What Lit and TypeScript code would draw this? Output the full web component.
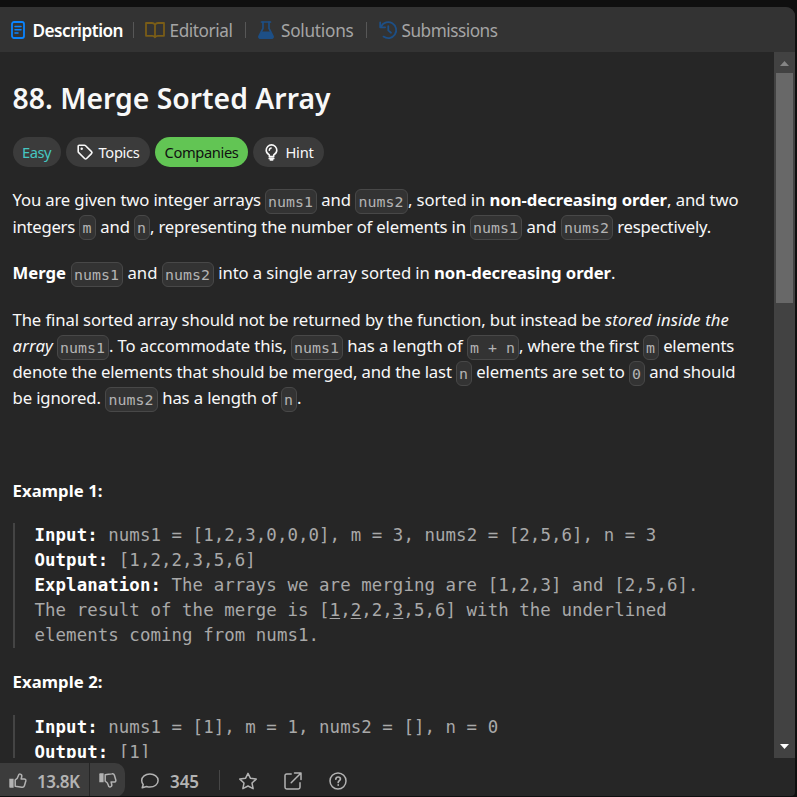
import { LitElement, html, css, svg } from "lit";
import { customElement, property } from "lit/decorators.js";
import { classMap } from "lit/directives/class-map.js";
import { styleMap } from "lit/directives/style-map.js";

/** A run of text tracked so that it fills a given measure. */
@customElement("fit-text")
class FitText extends LitElement {
  @property() text = "";
  @property({ type: Number }) measure = 0;
  @property({ type: Boolean }) underlined = false;

  static styles = css`
    :host { display: block; flex: none; white-space: pre; }
    .run { display: inline-block; vertical-align: top; }
    .underlined { text-decoration: underline; text-underline-offset: 2px; text-decoration-thickness: 1px; }
  `;

  updated() {
    const run = this.renderRoot.querySelector(".run") as HTMLElement;
    this.style.width = `${this.measure}px`;
    run.style.letterSpacing = "0px";
    const natural = run.getBoundingClientRect().width;
    run.style.letterSpacing = `${(this.measure - natural) / this.text.length}px`;
  }

  render() {
    return html`<span class=${classMap({ run: true, underlined: this.underlined })}>${this.text}</span>`;
  }
}

type Kind = "t" | "b" | "i" | "c" | "u";
type Run = [Kind, string, number];

const paragraphs: Run[][][] = [
  [
    [["t", "You are given two integer arrays ", 252.5], ["c", "nums1", 52], ["t", " and ", 38], ["c", "nums2", 53], ["t", ", sorted in ", 81.5], ["b", "non-decreasing order", 177.5], ["t", ", and two", 71.5]],
    [["t", "integers ", 66.5], ["c", "m", 17], ["t", " and ", 38], ["c", "n", 16], ["t", ", representing the number of elements in ", 320], ["c", "nums1", 52], ["t", " and ", 39], ["c", "nums2", 52], ["t", " respectively.", 98]],
  ],
  [
    [["b", "Merge", 53.5], ["t", " ", 5], ["c", "nums1", 52], ["t", " and ", 39], ["c", "nums2", 52], ["t", " into a single array sorted in ", 220], ["b", "non-decreasing order", 177], ["t", ".", 4]],
  ],
  [
    [["t", "The final sorted array should not be returned by the function, but instead be ", 592.5], ["i", "stored inside the", 124]],
    [["i", "array", 40.5], ["t", " ", 4], ["c", "nums1", 52], ["t", ". To accommodate this, ", 182], ["c", "nums1", 52], ["t", " has a length of ", 124], ["c", "m + n", 52], ["t", ", where the first ", 124], ["c", "m", 16], ["t", " elements", 75]],
    [["t", "denote the elements that should be merged, and the last ", 443.5], ["c", "n", 16], ["t", " elements are set to ", 157], ["c", "0", 16], ["t", " and should", 90.5]],
    [["t", "be ignored. ", 92.5], ["c", "nums2", 53], ["t", " has a length of ", 123], ["c", "n", 16], ["t", ".", 4]],
  ],
];

const CELL = 10.54;
const m = (kind: Kind, text: string): Run => [kind, text, text.length * CELL];

const example1: Run[][] = [
  [m("b", "Input:"), m("t", " nums1 = [1,2,3,0,0,0], m = 3, nums2 = [2,5,6], n = 3")],
  [m("b", "Output:"), m("t", " [1,2,2,3,5,6]")],
  [m("b", "Explanation:"), m("t", " The arrays we are merging are [1,2,3] and [2,5,6].")],
  [m("t", "The result of the merge is ["), m("u", "1"), m("t", ","), m("u", "2"), m("t", ",2,"), m("u", "3"), m("t", ",5,6] with the underlined")],
  [m("t", "elements coming from nums1.")],
];
const example2: Run[][] = [
  [m("b", "Input:"), m("t", " nums1 = [1], m = 1, nums2 = [], n = 0")],
  [m("b", "Output:"), m("t", " [1]")],
];

const line = (runs: Run[]) => html`<div class="line">
  ${runs.map(([kind, text, width]) =>
    kind === "c"
      ? html`<code class="chip" style=${styleMap({ width: `${width}px` })}>${text}</code>`
      : html`<fit-text
          class=${classMap({ bold: kind === "b", italic: kind === "i" })}
          .underlined=${kind === "u"}
          .text=${text}
          .measure=${width}
        ></fit-text>`
  )}
</div>`;

const icon = (cls: string, w: number, h: number, body: unknown) =>
  html`<svg class="icon ${cls}" width=${w} height=${h} viewBox="0 0 ${w} ${h}">${body}</svg>`;

const docIcon = icon("doc", 14, 18, svg`<rect x="1" y="1" width="12" height="16" rx="2"/><path class="fine" d="M4 5.500h6M4 8.800h6M4 12.100h3"/>`);
const bookIcon = icon("book", 20, 16, svg`<path d="M10 2.800C9.200 1.500 8.300 1 7 1H1v12.800h6.200c1.500 0 2.300.5 2.800 1.400.5-.9 1.300-1.400 2.800-1.400H19V1h-6c-1.300 0-2.200.5-3 1.800zM10 2.800v12"/>`);
const flaskIcon = icon("flask", 16, 18, svg`<path d="M3.500 1h9"/><path d="M5 1v6.300L1.200 14.800c-.6 1.300 0 2.300 1.400 2.300h10.800c1.400 0 2-1 1.400-2.300L11 7.300V1"/><path class="solid" d="M3.600 10.400h8.800l3 5.100c.3 1.300-.6 2.300-2 2.300H2.600c-1.400 0-2.300-1-2-2.300z"/>`);
const historyIcon = icon("history", 18, 18, svg`<path d="M2.200 5.300A8 8 0 1 1 4.500 15.600M1.200 1.500v4.800h4.900M9.300 5.200v4.200l2.700 2.300"/>`);
const tagIcon = icon("white", 16, 16, svg`<path d="M1.200 2.200v5.200c0 .5.200.9.500 1.200l5.900 5.900c.6.600 1.400.6 2 0l4.900-4.900c.6-.6.6-1.400 0-2L8.600 1.700c-.3-.3-.7-.5-1.200-.5H2.200c-.6 0-1 .4-1 1z"/><circle class="dot" cx="4.700" cy="4.700" r="1.200"/>`);
const bulbIcon = icon("white", 13, 17, svg`<path d="M4.300 12.600v-1.700C2.300 9.700 1.200 8.300 1.200 6.200a5.300 5.300 0 0 1 10.600 0c0 2.100-1.100 3.500-3.100 4.700v1.700zM4.300 6.200A2.300 2.300 0 0 1 6.100 4"/><path class="base" d="M4.300 14.400h4.400M5.400 15.800h2.200"/>`);
const thumb = svg`<path d="M6.200 8.900c2-1 2.800-2.300 3.200-4.200.3-1.400 1-2 2-1.600 1.200.4 1.600 1.500 1.300 2.700l-.6 2.200h3c1.300 0 2 .9 1.700 2l-1.400 4.700c-.4 1.300-1.300 1.700-2.500 1.500l-6.700-.9z"/><path class="fill" d="M.3 7.800h4.300v8.900H1.300c-.6 0-1-.4-1-1z"/>`;
const upIcon = icon("grey", 18, 18, thumb);
const downIcon = icon("grey", 18, 18, svg`<g transform="translate(0 18) scale(1 -1)">${thumb}</g>`);
const commentIcon = icon("grey", 20, 18, svg`<path d="M2.200 15.800l1-3.300C2.200 11.400 1.700 10.100 1.700 8.600c0-3.700 3.600-6.500 8.200-6.500s8.200 2.800 8.200 6.500-3.600 6.500-8.200 6.500c-1.200 0-2.300-.2-3.300-.6z"/>`);
const starIcon = icon("grey", 20, 18, svg`<path d="M10 1.300l2.500 5 5.700.8-4.200 3.900 1.100 5.700-5.100-2.700-5.100 2.700L6 11 1.800 7.100l5.700-.8z"/>`);
const shareIcon = icon("grey", 18, 18, svg`<path d="M7.200 2H2.700C1.600 2 1 2.600 1 3.700v11.600C1 16.400 1.600 17 2.700 17h11.600c1.100 0 1.700-.6 1.700-1.700v-4.500M10.500 1H17v6.500M17 1L7.200 10.800"/>`);
const helpIcon = icon("grey", 18, 18, svg`<circle cx="9" cy="9" r="8"/><path class="heavy" d="M6.800 7.100c.1-1.400 1-2.100 2.300-2.100 1.400 0 2.300.8 2.300 1.900 0 1.600-2.200 1.700-2.200 3.500M9.200 12.900v.2"/>`);

@customElement("app-root")
class AppRoot extends LitElement {
  static styles = css`
    :host {
      display: block; box-sizing: border-box; width: 797px; height: 797px; overflow: hidden;
      padding: 7px 2px 1px 0; background: #0f0f0f; color: #f8f8f8;
      font-family: "Noto Sans", "Open Sans", sans-serif; font-size: 16.7px;
    }
    .panel { display: flex; flex-direction: column; height: 789px; background: #262626; border-radius: 0 9px 4px 0; overflow: hidden; }
    .icon { display: block; flex: none; fill: none; stroke: currentColor; stroke-width: 1.6; stroke-linejoin: round; stroke-linecap: round; overflow: visible; }
    .tabs { display: flex; align-items: center; flex: none; height: 45px; padding-left: 11px; background: #333; color: #a5a5a5; font-size: 17.2px; line-height: 24px; }
    .tab { display: flex; align-items: center; height: 45px; }
    .tab fit-text { margin-top: 3px; }
    .tools fit-text { margin-top: 3px; }
    .active { color: #fff; font-weight: 600; }
    .gap8 { gap: 7.5px; } .gap5 { gap: 5px; } .gap7 { gap: 7.5px; }
    .sep { width: 1px; height: 16px; margin: 0 10.5px 0 10px; background: #575757; }
    .sep.wide { margin-left: 12px; margin-right: 12px; }
    .doc { color: #0a84ff; stroke-width: 1.8; }
    .fine { stroke-width: 1.500; }
    .book { color: #7a5d17; stroke-width: 1.8; }
    .flask { color: #1d4f86; stroke-width: 1.7; }
    .history { color: #1d4f86; stroke-width: 1.8; }
    .solid, .fill { fill: currentColor; stroke: none; }
    .main { display: flex; flex: none; height: 706px; }
    .content { flex: 1; min-width: 0; height: 706px; box-sizing: border-box; overflow: hidden; padding: 26px 0 0 12.5px; }
    h1 { margin: 0; height: 40px; line-height: 40px; font-size: 28.3px; font-weight: 600; }
    .pills { display: flex; gap: 5px; margin-top: 19px; height: 30px; font-size: 14.7px; line-height: 30px; }
    .pill { display: flex; align-items: center; justify-content: center; box-sizing: border-box; height: 30px; border-radius: 15px; background: #3b3b3b; }
    .easy { width: 48px; color: #46c6c2; } .topics { width: 84px; gap: 6px; padding-left: 1px; }
    .companies { width: 93px; background: #62c554; color: #111; padding-left: 1px; } .hint { width: 71px; gap: 8px; padding-left: 2px; }
    .dot { fill: currentColor; stroke: none; }
    .base { stroke-width: 1.8; }
    .para { margin-top: 20.3px; }
    .line { display: flex; align-items: center; height: 26.25px; line-height: 26.25px; }
    .bold { font-weight: 700; color: #fff; } .italic { font-style: italic; }
    .chip {
      display: flex; flex: none; align-items: center; justify-content: center; box-sizing: border-box; height: 25px; margin-top: 2.5px; padding: 1px 1px 0 0;
      border: 1px solid #484848; border-radius: 6px; background: #333; color: #b3b3b3;
      font: 14.9px/20px "DejaVu Sans Mono", monospace; white-space: pre;
    }
    .spacer { height: 46px; }
    .label { margin-top: 20.3px; height: 26.25px; line-height: 26.25px; font-weight: 700; color: #fff; }
    .block { margin-top: 18.5px; border-left: 2px solid #444; padding-left: 20px; color: #a9a9a9; font-family: "DejaVu Sans Mono", monospace; font-size: 17.4px; }
    .block + .label { margin-top: 21px; }
    .label.second + .block { margin-top: 20px; }
    .block .line { height: 25px; line-height: 25px; }
    .scroll { display: flex; flex-direction: column; align-items: center; flex: none; width: 21px; background: #424242; }
    .arrow { height: 21px; width: 21px; display: block; flex: none; }
    .thumb { width: 17px; height: 230px; background: #686868; }
    .rest { flex: 1; }
    .tools { display: flex; align-items: center; flex: none; height: 34px; margin-top: 5px; color: #b3b3b3; font-size: 17px; font-weight: 600; line-height: 24px; }
    .like { display: flex; align-items: center; box-sizing: border-box; height: 34px; width: 89px; padding-left: 9px; gap: 10px; background: #3c3c3c; }
    .dislike { display: flex; align-items: center; box-sizing: border-box; height: 34px; width: 35px; margin-left: 1px; padding: 1px 0 0 9px; background: #3c3c3c; border-radius: 0 10px 10px 0; }
    .comments { display: flex; align-items: center; gap: 10px; margin-left: 15px; }
    .comments .icon { margin-top: 2px; }
    .bar { width: 1px; height: 20px; margin: 0 17.5px 0 20px; background: #464646; }
    .actions { display: flex; align-items: center; gap: 26.500px; padding-top: 2px; }
    .grey { stroke-width: 1.5; } .heavy { stroke-width: 1.7; }
  `;

  render() {
    const fit = (text: string, width: number) => html`<fit-text .text=${text} .measure=${width}></fit-text>`;
    return html`<div class="panel">
      <nav class="tabs">
        <div class="tab gap8">${docIcon}<div class="active">${fit("Description", 90.5)}</div></div>
        <i class="sep"></i>
        <div class="tab gap5">${bookIcon}${fit("Editorial", 63)}</div>
        <i class="sep wide"></i>
        <div class="tab gap7">${flaskIcon}${fit("Solutions", 72.5)}</div>
        <i class="sep wide"></i>
        <div class="tab gap5">${historyIcon}${fit("Submissions", 96)}</div>
      </nav>
      <div class="main">
        <main class="content">
          <h1>${fit("88. Merge Sorted Array", 318)}</h1>
          <div class="pills">
            <span class="pill easy">${fit("Easy", 29)}</span>
            <span class="pill topics">${tagIcon}${fit("Topics", 41)}</span>
            <span class="pill companies">${fit("Companies", 74)}</span>
            <span class="pill hint">${bulbIcon}${fit("Hint", 28)}</span>
          </div>
          ${paragraphs.map((lines) => html`<div class="para">${lines.map(line)}</div>`)}
          <div class="spacer"></div>
          <div class="label">${fit("Example 1:", 90)}</div>
          <div class="block">${example1.map(line)}</div>
          <div class="label second">${fit("Example 2:", 90)}</div>
          <div class="block">${example2.map(line)}</div>
        </main>
        <div class="scroll">
          <svg class="arrow" viewBox="0 0 21 21"><path d="M6 14h9l-4.500-5z" fill="#858585"/></svg>
          <div class="thumb"></div>
          <div class="rest"></div>
          <svg class="arrow" viewBox="0 0 21 21"><path d="M6 7h9l-4.500 5z" fill="#fff"/></svg>
        </div>
      </div>
      <footer class="tools">
        <div class="like">${upIcon}${fit("13.8K", 42.5)}</div>
        <div class="dislike">${downIcon}</div>
        <div class="comments">${commentIcon}${fit("345", 29)}</div>
        <i class="bar"></i>
        <div class="actions">${starIcon}${shareIcon}${helpIcon}</div>
      </footer>
    </div>`;
  }
}
